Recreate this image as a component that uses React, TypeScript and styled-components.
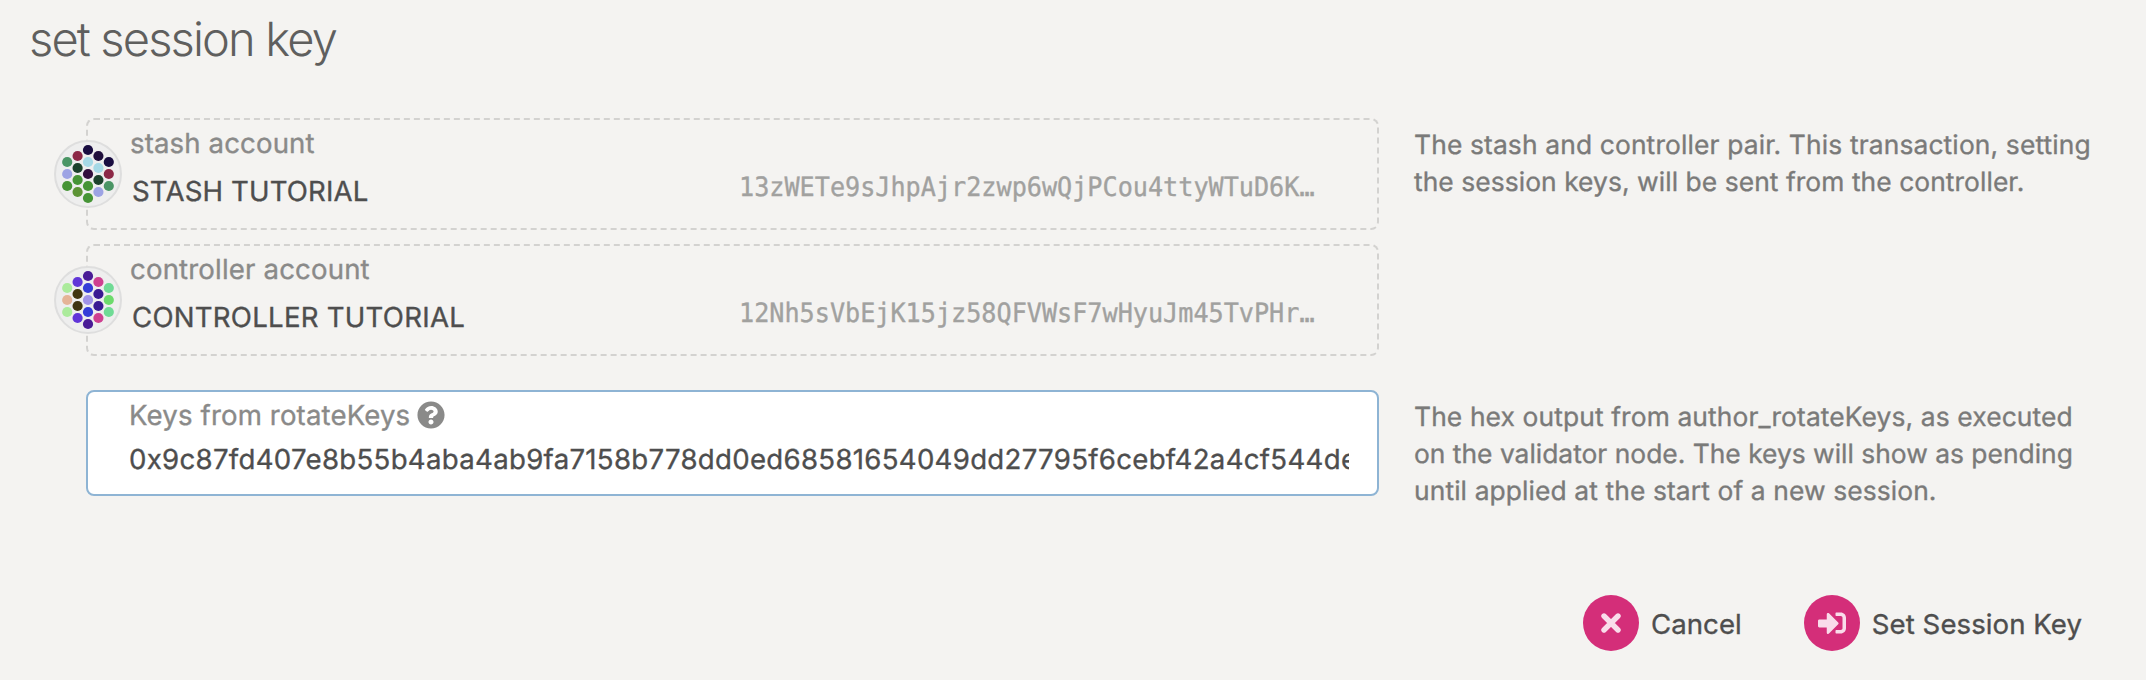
import React from 'react';
import styled, { createGlobalStyle } from 'styled-components';
import { FaQuestionCircle, FaSignInAlt } from 'react-icons/fa';

const GlobalStyle = createGlobalStyle`
  * { box-sizing: border-box; }
  body {
    margin: 0;
    background: #f4f3f1;
    color: #4e4e4e;
    font-family: Inter, "Liberation Sans", sans-serif;
    font-size: 27.6px;
    line-height: 36px;
    text-rendering: geometricPrecision;
    -webkit-text-stroke-width: 0.35px;
  }
`;

const Modal = styled.main`
  height: 680px;
  overflow: hidden;
`;

const Title = styled.h1`
  margin: 0;
  padding: 11px 0 0 29px;
  height: 118px;
  font-size: 47px;
  font-weight: 300;
  line-height: 58px;
  letter-spacing: -1.85px;
  color: #5f5f5e;
  -webkit-text-stroke-width: 0;
`;

const Columns = styled.section`
  display: grid;
  grid-template-columns: 1293px 1fr;
  column-gap: 35px;
  padding-left: 86px;
`;

const AccountsSection = styled(Columns)`
  height: 272px;
`;

const KeysSection = styled(Columns)`
  height: 205px;
`;

const Accounts = styled.div`
  display: flex;
  flex-direction: column;
  gap: 14px;
`;

const AccountBox = styled.div`
  position: relative;
  height: 112px;
  padding: 5px 42px 0;
  border: 2px dashed #d3d2d0;
  border-radius: 8px;
`;

const Identicon = styled.svg`
  position: absolute;
  left: -34px;
  top: 20px;
  width: 68px;
  height: 68px;
`;

const Label = styled.div<{ $tracking: number }>`
  display: flex;
  align-items: center;
  gap: 7px;
  height: 36px;
  color: #8a8a89;
  letter-spacing: ${(p) => p.$tracking}px;
  white-space: pre;
`;

const AccountRow = styled.div`
  display: grid;
  grid-template-columns: 607px 1fr;
  padding: 9px 0 0 2px;
`;

const AccountName = styled.span<{ $tracking: number }>`
  padding-top: 3px;
  letter-spacing: ${(p) => p.$tracking}px;
`;

const Address = styled.span`
  font-family: "DejaVu Sans Mono", monospace;
  font-size: 26.6px;
  color: #a1a19f;
  white-space: nowrap;
  transform: scaleX(0.946);
  transform-origin: left;
`;

const KeyField = styled.div`
  height: 106px;
  padding: 5px 28px 0 41px;
  border: 2px solid #8eb4d4;
  border-radius: 8px;
  background: #fff;
`;

const HelpIcon = styled(FaQuestionCircle)`
  width: 28px;
  height: 28px;
`;

const KeyValue = styled.div`
  margin-top: 8px;
  overflow: hidden;
  white-space: nowrap;
  letter-spacing: 0.3px;
`;

const Help = styled.div`
  padding-top: 9px;
  font-size: 26.4px;
  line-height: 37px;
  color: #7a7a79;
`;

const HelpLine = styled.div<{ $tracking: number }>`
  white-space: nowrap;
  letter-spacing: ${(p) => p.$tracking}px;
`;

const Actions = styled.footer`
  display: flex;
  justify-content: flex-end;
  gap: 62px;
  padding-right: 64px;
`;

const ActionButton = styled.button`
  display: flex;
  align-items: center;
  gap: 12px;
  padding: 0;
  border: 0;
  background: none;
  color: inherit;
  font: inherit;
  letter-spacing: 0.06px;
  white-space: nowrap;
`;

const ActionText = styled.span`
  padding-top: 1px;
`;

const IconDisc = styled.span`
  display: flex;
  align-items: center;
  justify-content: center;
  width: 56px;
  height: 56px;
  border-radius: 50%;
  background: #d42e79;
  color: #f9dcea;
`;

const SignInIcon = styled(FaSignInAlt)`
  width: 28px;
  height: 28px;
`;

const dotColumns = {
  stash: [
    ['#4a9565', '#9da3e4', '#469436'],
    ['#8c2847', '#1c422c', '#469436', '#5d9436'],
    ['#180c40', '#a6d9e6', '#330f3d', '#469436', '#469436'],
    ['#200f3d', '#a6d9e6', '#1c422c', '#9da3e4'],
    ['#180c40', '#8c2847', '#4a9565'],
  ],
  controller: [
    ['#abeb9c', '#e5b497', '#abeb9c'],
    ['#6035d8', '#403510', '#403510', '#6035d8'],
    ['#4a1c96', '#343dd8', '#a093e8', '#343dd8', '#4a1c96'],
    ['#ce4090', '#3a1a92', '#3a1a92', '#ce4090'],
    ['#6fdb95', '#6cdb6c', '#6fdb95'],
  ],
};

function AccountIcon({ columns }: { columns: string[][] }) {
  return (
    <Identicon viewBox="-34 -34 68 68">
      <circle r="33" fill="#eeeeee" stroke="#dedede" strokeWidth="2" />
      {columns.map((column, x) =>
        column.map((fill, y) => (
          <circle
            key={`${x}-${y}`}
            cx={(x - 2) * 10.4}
            cy={(y - (column.length - 1) / 2) * 12}
            r="5.1"
            fill={fill}
          />
        ))
      )}
    </Identicon>
  );
}

interface AccountProps {
  label: string;
  labelTracking: number;
  name: string;
  nameTracking: number;
  address: string;
  columns: string[][];
}

function Account({ label, labelTracking, name, nameTracking, address, columns }: AccountProps) {
  return (
    <AccountBox>
      <AccountIcon columns={columns} />
      <Label $tracking={labelTracking}>{label}</Label>
      <AccountRow>
        <AccountName $tracking={nameTracking}>{name}</AccountName>
        <Address>{address}</Address>
      </AccountRow>
    </AccountBox>
  );
}

export default function App() {
  return (
    <>
      <GlobalStyle />
      <Modal>
        <Title>set session key</Title>
        <AccountsSection>
          <Accounts>
            <Account
              label="stash account"
              labelTracking={0.12}
              name="STASH TUTORIAL"
              nameTracking={0.15}
              address="13zWETe9sJhpAjr2zwp6wQjPCou4ttyWTuD6K…"
              columns={dotColumns.stash}
            />
            <Account
              label="controller account"
              labelTracking={0.16}
              name="CONTROLLER TUTORIAL"
              nameTracking={0.25}
              address="12Nh5sVbEjK15jz58QFVWsF7wHyuJm45TvPHr…"
              columns={dotColumns.controller}
            />
          </Accounts>
          <Help>
            <HelpLine $tracking={0.13}>The stash and controller pair. This transaction, setting</HelpLine>
            <HelpLine $tracking={0.06}>the session keys, will be sent from the controller.</HelpLine>
          </Help>
        </AccountsSection>
        <KeysSection>
          <KeyField>
            <Label $tracking={0.14}>
              Keys from rotateKeys
              <HelpIcon />
            </Label>
            <KeyValue>0x9c87fd407e8b55b4aba4ab9fa7158b778dd0ed68581654049dd27795f6cebf42a4cf544de</KeyValue>
          </KeyField>
          <Help>
            <HelpLine $tracking={0.11}>The hex output from author_rotateKeys, as executed</HelpLine>
            <HelpLine $tracking={0}>on the validator node. The keys will show as pending</HelpLine>
            <HelpLine $tracking={0.1}>until applied at the start of a new session.</HelpLine>
          </Help>
        </KeysSection>
        <Actions>
          <ActionButton>
            <IconDisc>
              <svg width="20" height="20" viewBox="0 0 20 20">
                <path d="M3 3 17 17M17 3 3 17" stroke="currentColor" strokeWidth="5.4" strokeLinecap="round" />
              </svg>
            </IconDisc>
            <ActionText>Cancel</ActionText>
          </ActionButton>
          <ActionButton>
            <IconDisc>
              <SignInIcon />
            </IconDisc>
            <ActionText>Set Session Key</ActionText>
          </ActionButton>
        </Actions>
      </Modal>
    </>
  );
}
